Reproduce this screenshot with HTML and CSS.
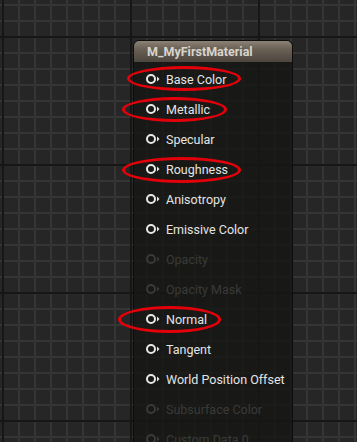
FILE: index.html
```html
<!DOCTYPE html>
<html lang="en">
<head>
  <meta charset="UTF-8">
  <title>M_MyFirstMaterial</title>
  <link rel="stylesheet" href="styles.css">
</head>
<body>
  <div class="node">
    <div class="node-title">M_MyFirstMaterial</div>
    <div class="pins">
      <div class="pin"><svg class="pin-icon" width="16" height="12" viewBox="0 0 16 12"><circle cx="5" cy="6" r="4" /><path d="M11 3.5 L13.5 6 L11 8.5 Z" /></svg><span>Base Color</span></div>
      <div class="pin"><svg class="pin-icon" width="16" height="12" viewBox="0 0 16 12"><circle cx="5" cy="6" r="4" /><path d="M11 3.5 L13.5 6 L11 8.5 Z" /></svg><span>Metallic</span></div>
      <div class="pin"><svg class="pin-icon" width="16" height="12" viewBox="0 0 16 12"><circle cx="5" cy="6" r="4" /><path d="M11 3.5 L13.5 6 L11 8.5 Z" /></svg><span>Specular</span></div>
      <div class="pin"><svg class="pin-icon" width="16" height="12" viewBox="0 0 16 12"><circle cx="5" cy="6" r="4" /><path d="M11 3.5 L13.5 6 L11 8.5 Z" /></svg><span>Roughness</span></div>
      <div class="pin"><svg class="pin-icon" width="16" height="12" viewBox="0 0 16 12"><circle cx="5" cy="6" r="4" /><path d="M11 3.5 L13.5 6 L11 8.5 Z" /></svg><span>Anisotropy</span></div>
      <div class="pin"><svg class="pin-icon" width="16" height="12" viewBox="0 0 16 12"><circle cx="5" cy="6" r="4" /><path d="M11 3.5 L13.5 6 L11 8.5 Z" /></svg><span>Emissive Color</span></div>
      <div class="pin off"><svg class="pin-icon" width="16" height="12" viewBox="0 0 16 12"><circle cx="5" cy="6" r="4" /><path d="M11 3.5 L13.5 6 L11 8.5 Z" /></svg><span>Opacity</span></div>
      <div class="pin off"><svg class="pin-icon" width="16" height="12" viewBox="0 0 16 12"><circle cx="5" cy="6" r="4" /><path d="M11 3.5 L13.5 6 L11 8.5 Z" /></svg><span>Opacity Mask</span></div>
      <div class="pin"><svg class="pin-icon" width="16" height="12" viewBox="0 0 16 12"><circle cx="5" cy="6" r="4" /><path d="M11 3.5 L13.5 6 L11 8.5 Z" /></svg><span>Normal</span></div>
      <div class="pin"><svg class="pin-icon" width="16" height="12" viewBox="0 0 16 12"><circle cx="5" cy="6" r="4" /><path d="M11 3.5 L13.5 6 L11 8.5 Z" /></svg><span>Tangent</span></div>
      <div class="pin"><svg class="pin-icon" width="16" height="12" viewBox="0 0 16 12"><circle cx="5" cy="6" r="4" /><path d="M11 3.5 L13.5 6 L11 8.5 Z" /></svg><span>World Position Offset</span></div>
      <div class="pin off"><svg class="pin-icon" width="16" height="12" viewBox="0 0 16 12"><circle cx="5" cy="6" r="4" /><path d="M11 3.5 L13.5 6 L11 8.5 Z" /></svg><span>Subsurface Color</span></div>
      <div class="pin off"><svg class="pin-icon" width="16" height="12" viewBox="0 0 16 12"><circle cx="5" cy="6" r="4" /><path d="M11 3.5 L13.5 6 L11 8.5 Z" /></svg><span>Custom Data 0</span></div>
    </div>
  </div>

  <!-- red marks drawn over the screenshot -->
  <div class="mark mark-base"></div>
  <div class="mark mark-metal"></div>
  <div class="mark mark-rough"></div>
  <div class="mark mark-normal"></div>
</body>
</html>
```

FILE: styles.css
```css
html, body {
  margin: 0;
  height: 100%;
  overflow: hidden;
}
body {
  position: relative;
  font-family: Roboto, "Liberation Sans", sans-serif;
  background-color: #262626;
  background-image:
    linear-gradient(to right, #161616 2px, transparent 2px),
    linear-gradient(to bottom, #161616 2px, transparent 2px),
    linear-gradient(to right, #353535 2px, transparent 2px),
    linear-gradient(to bottom, #353535 2px, transparent 2px);
  background-size: 128px 128px, 128px 128px, 16px 16px, 16px 16px;
  background-position: 2px 36px, 2px 36px, 2px 4px, 2px 4px;
}

.node {
  margin-left: 133px;
  padding-top: 40px;
  width: 160px;
}
.node-title {
  height: 21px;
  line-height: 21px;
  padding-left: 13px;
  border-radius: 6px 6px 0 0;
  background: linear-gradient(to bottom, #8c8275 0%, #6c6256 35%, #4c463f 100%);
  color: #d8d4ce;
  font-weight: bold;
  font-size: 12.5px;
  border: 1px solid #0c0c0c;
  border-bottom: none;
}
.pins {
  background: rgba(22, 23, 20, 0.82);
  border-left: 1px solid #0c0c0c;
  border-right: 1px solid #0c0c0c;
  padding-top: 2px;
  height: 379px;
  overflow: hidden;
}
.pin {
  display: flex;
  align-items: center;
  height: 30px;
  padding-left: 12px;
  color: #e4e4e4;
  font-size: 12.5px;
}
.pin-icon {
  margin-right: 4px;
}
.pin-icon circle {
  fill: none;
  stroke: #e8e8e8;
  stroke-width: 2;
}
.pin-icon path {
  fill: #e8e8e8;
}
.pin.off {
  color: #3a3a38;
}
.pin.off .pin-icon circle {
  stroke: #3a3a38;
}
.pin.off .pin-icon path {
  fill: #3a3a38;
}

.mark {
  position: absolute;
  border: 3px solid #e4000a;
  border-radius: 50%;
}
.mark-base {
  left: 127px;
  top: 66px;
  width: 108px;
  height: 19px;
}
.mark-metal {
  left: 122px;
  top: 97px;
  width: 99px;
  height: 19px;
}
.mark-rough {
  left: 122px;
  top: 157px;
  width: 113px;
  height: 20px;
}
.mark-normal {
  left: 118px;
  top: 306px;
  width: 97px;
  height: 21px;
}
```
